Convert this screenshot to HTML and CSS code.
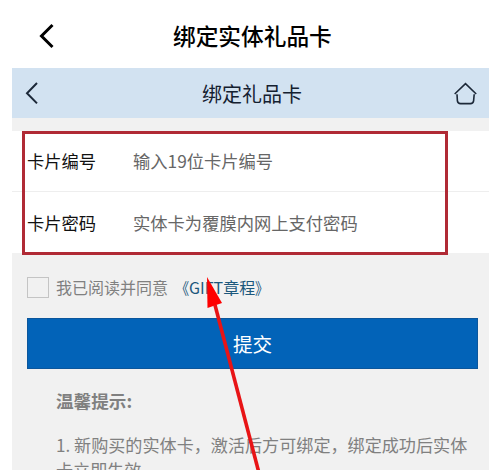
FILE: index.html
```
<!DOCTYPE html>
<html lang="zh-CN">
<head>
    <meta charset="UTF-8">
    <title>绑定实体礼品卡</title>
    <link rel="stylesheet" href="styles.css">
</head>
<body>
    <header class="topBar">
        <svg class="topBack" width="16" height="26" viewBox="0 0 16 26">
            <path d="M14.5 2 L3.5 13 L14.5 24" />
        </svg>
        <h1>绑定实体礼品卡</h1>
    </header>

    <main class="page">
        <div class="navBar">
            <svg class="navBack" width="14" height="24" viewBox="0 0 14 24">
                <path d="M12 2 L2 12.2 L12 22.4" />
            </svg>
            <h2>绑定礼品卡</h2>
            <svg class="navHome" width="24" height="24" viewBox="0 0 24 24">
                <path d="M1.7 13 L12.5 2.7 L23.2 13" />
                <path d="M4 13.2 L4.4 19.8 Q4.8 22.6 7.5 22.6 H17.5 Q20.2 22.6 20.6 19.8 L21.2 13.2" />
            </svg>
        </div>

        <form class="cardForm">
            <div class="row">
                <label>卡片编号</label>
                <span class="hint">输入19位卡片编号</span>
            </div>
            <div class="row">
                <label>卡片密码</label>
                <span class="hint">实体卡为覆膜内网上支付密码</span>
            </div>
            <div class="marker"></div>
        </form>

        <div class="agree">
            <span class="checkBox"></span>
            <span class="agreeText">我已阅读并同意</span>
            <a class="rules"><span class="bracket open">《</span>GIFT章程<span class="bracket">》</span></a>
        </div>

        <button class="submitBtn" type="button">提交</button>

        <section class="tips">
            <h3>温馨提示:</h3>
            <p>1. 新购买的实体卡，激活后方可绑定，绑定成功后实体<br>卡立即失效。</p>
        </section>
    </main>

    <svg class="arrow" width="60" height="194" viewBox="0 0 60 194">
        <path class="shaft" d="M13 28 L57 196" />
        <path class="head" d="M5 0 L20 26 L5.5 31 Z" />
    </svg>
</body>
</html>
```

FILE: styles.css
```
* {
    box-sizing: border-box;
}
body {
    position: relative;
    height: 470px;
    margin: 0;
    overflow: hidden;
    background: #fff;
    font-family: 'Noto Sans CJK SC', sans-serif;
}
h1, h2, h3, p {
    margin: 0;
}
svg {
    flex: none;
    fill: none;
}

/* 顶部标题 */
.topBar {
    display: flex;
    align-items: center;
    height: 68px;
    padding: 3px 0 0 38px;
}
.topBack {
    stroke: #000;
    stroke-width: 3;
}
.topBar h1 {
    margin-left: 119px;
    font-size: 22.7px;
    line-height: 32px;
    font-weight: 500;
    color: #000;
}

.page {
    height: 402px;
    margin-left: 12px;
    overflow: hidden;
    background: #f1f1f1;
}
.navBar {
    display: flex;
    align-items: center;
    height: 50px;
    padding: 0 12px 0 13px;
    background: #d2e2f1;
}
.navBack {
    stroke: #1c2838;
    stroke-width: 2;
}
.navBar h2 {
    margin-left: 163px;
    padding-top: 2px;
    font-size: 20px;
    line-height: 30px;
    font-weight: 400;
    color: #142030;
}
.navHome {
    margin-left: auto;
    stroke: #1c2838;
    stroke-width: 1.6;
}

/* 卡号和密码 */
.cardForm {
    position: relative;
    margin-top: 13px;
    background: #fff;
}
.row {
    display: flex;
    align-items: center;
    height: 61px;
    padding: 0 0 1px 15px;
    font-size: 17.3px;
}
.row:first-child {
    border-bottom: 1px solid #eee;
}
.row label {
    width: 106px;
    color: #111;
}
.hint {
    color: #666;
}
.marker {
    position: absolute;
    top: 0;
    left: 10px;
    width: 426px;
    height: 124px;
    border: 3px solid #b02a35;
}

.agree {
    display: flex;
    align-items: center;
    height: 65px;
    padding: 3px 0 0 15px;
    font-size: 16px;
}
.checkBox {
    width: 22px;
    height: 21px;
    border: 1px solid #c4c4c4;
}
.agreeText {
    margin-left: 7px;
    color: #808080;
}
.rules {
    display: flex;
    margin-left: 5px;
    color: #1c587c;
}
.bracket {
    width: 16px;
    transform: scaleX(0.85);
    transform-origin: left;
}
.bracket.open {
    transform-origin: right;
}

.submitBtn {
    display: block;
    width: 451px;
    height: 51px;
    margin-left: 15px;
    padding: 0;
    border: 1px solid #0b569c;
    background: #0263b8;
    color: #fff;
    font-family: inherit;
    font-size: 19.6px;
}

/* 温馨提示 */
.tips {
    padding: 19px 0 0 44px;
    color: #808080;
}
.tips h3 {
    font-size: 17.6px;
    line-height: 26px;
    font-weight: 700;
}
.tips p {
    margin-top: 18px;
    font-size: 17.1px;
    line-height: 25px;
    white-space: nowrap;
}

.arrow {
    position: absolute;
    left: 202px;
    top: 277px;
}
.shaft {
    stroke: #e81416;
    stroke-width: 3.6;
}
.head {
    fill: #fe0000;
}
```
